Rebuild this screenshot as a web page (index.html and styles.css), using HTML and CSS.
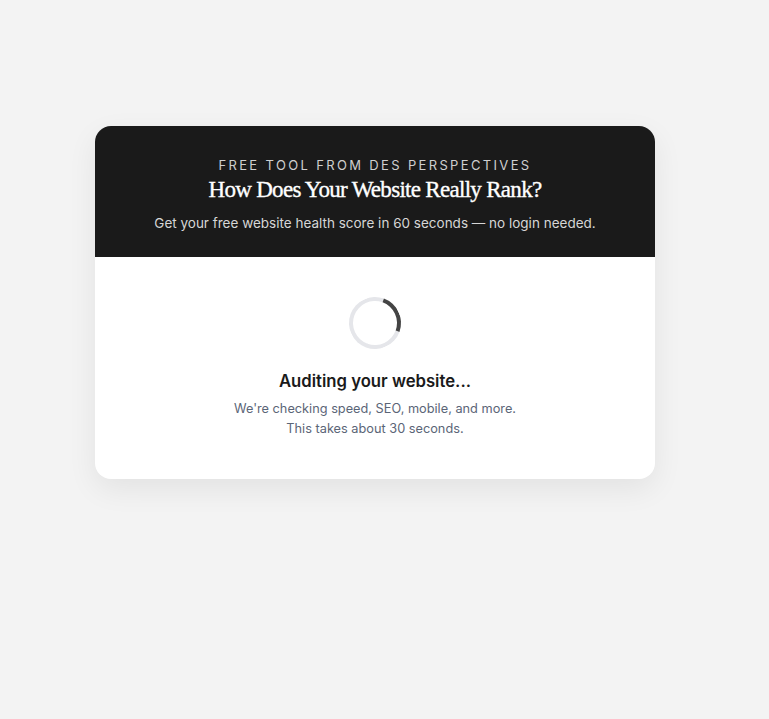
FILE: index.html
```html
<!DOCTYPE html>
<html lang="en">
<head>
<meta charset="utf-8">
<title>Website Health Score</title>
<link rel="stylesheet" href="styles.css">
</head>
<body>
<div class="page">
  <div class="card">
    <header class="card-head">
      <p class="eyebrow">FREE TOOL FROM DES PERSPECTIVES</p>
      <h1 class="title">How Does Your Website Really Rank?</h1>
      <p class="subtitle">Get your free website health score in 60 seconds — no login needed.</p>
    </header>
    <section class="card-body">
      <div class="spinner"></div>
      <h2 class="status">Auditing your website...</h2>
      <p class="note">We're checking speed, SEO, mobile, and more.<br>This takes about 30 seconds.</p>
    </section>
  </div>
</div>
</body>
</html>
```
FILE: styles.css
```css
html, body {
  margin: 0;
  padding: 0;
  background: #f3f3f3;
}
body {
  font-family: Inter, "Noto Sans", sans-serif;
  min-height: 719px;
}
.page {
  width: 750px;
  padding-top: 126px;
}
.card {
  width: 560px;
  margin: 0 auto;
  background: #ffffff;
  border-radius: 16px;
  overflow: hidden;
  box-shadow: 0 10px 30px rgba(0, 0, 0, 0.07);
}
.card-head {
  background: #1a1a1a;
  text-align: center;
  padding: 31px 24px 24px;
}
.eyebrow {
  margin: 0;
  font-size: 13px;
  line-height: 16px;
  letter-spacing: 2.35px;
  color: #cfcfcf;
}
.title {
  margin: 3px 0 0;
  font-family: "Liberation Serif", "DejaVu Serif", serif;
  font-weight: 400;
  font-size: 23px;
  line-height: 27px;
  letter-spacing: -0.7px;
  -webkit-text-stroke: 0.35px #ffffff;
  color: #ffffff;
}
.subtitle {
  margin: 10px 0 0;
  font-size: 13.5px;
  line-height: 20px;
  color: #d6d6d6;
}
.card-body {
  display: flex;
  flex-direction: column;
  align-items: center;
  padding: 40px 24px 40px;
  text-align: center;
}
.spinner {
  width: 44px;
  height: 44px;
  border: 4px solid #e5e6ea;
  border-right-color: #444444;
  border-radius: 50%;
  transform: rotate(-25deg);
}
.status {
  margin: 20px 0 0;
  font-size: 16.7px;
  line-height: 24px;
  font-weight: 600;
  color: #1a1a1a;
}
.note {
  margin: 6px 0 0;
  font-size: 12.75px;
  line-height: 20px;
  color: #5b6577;
}
```
